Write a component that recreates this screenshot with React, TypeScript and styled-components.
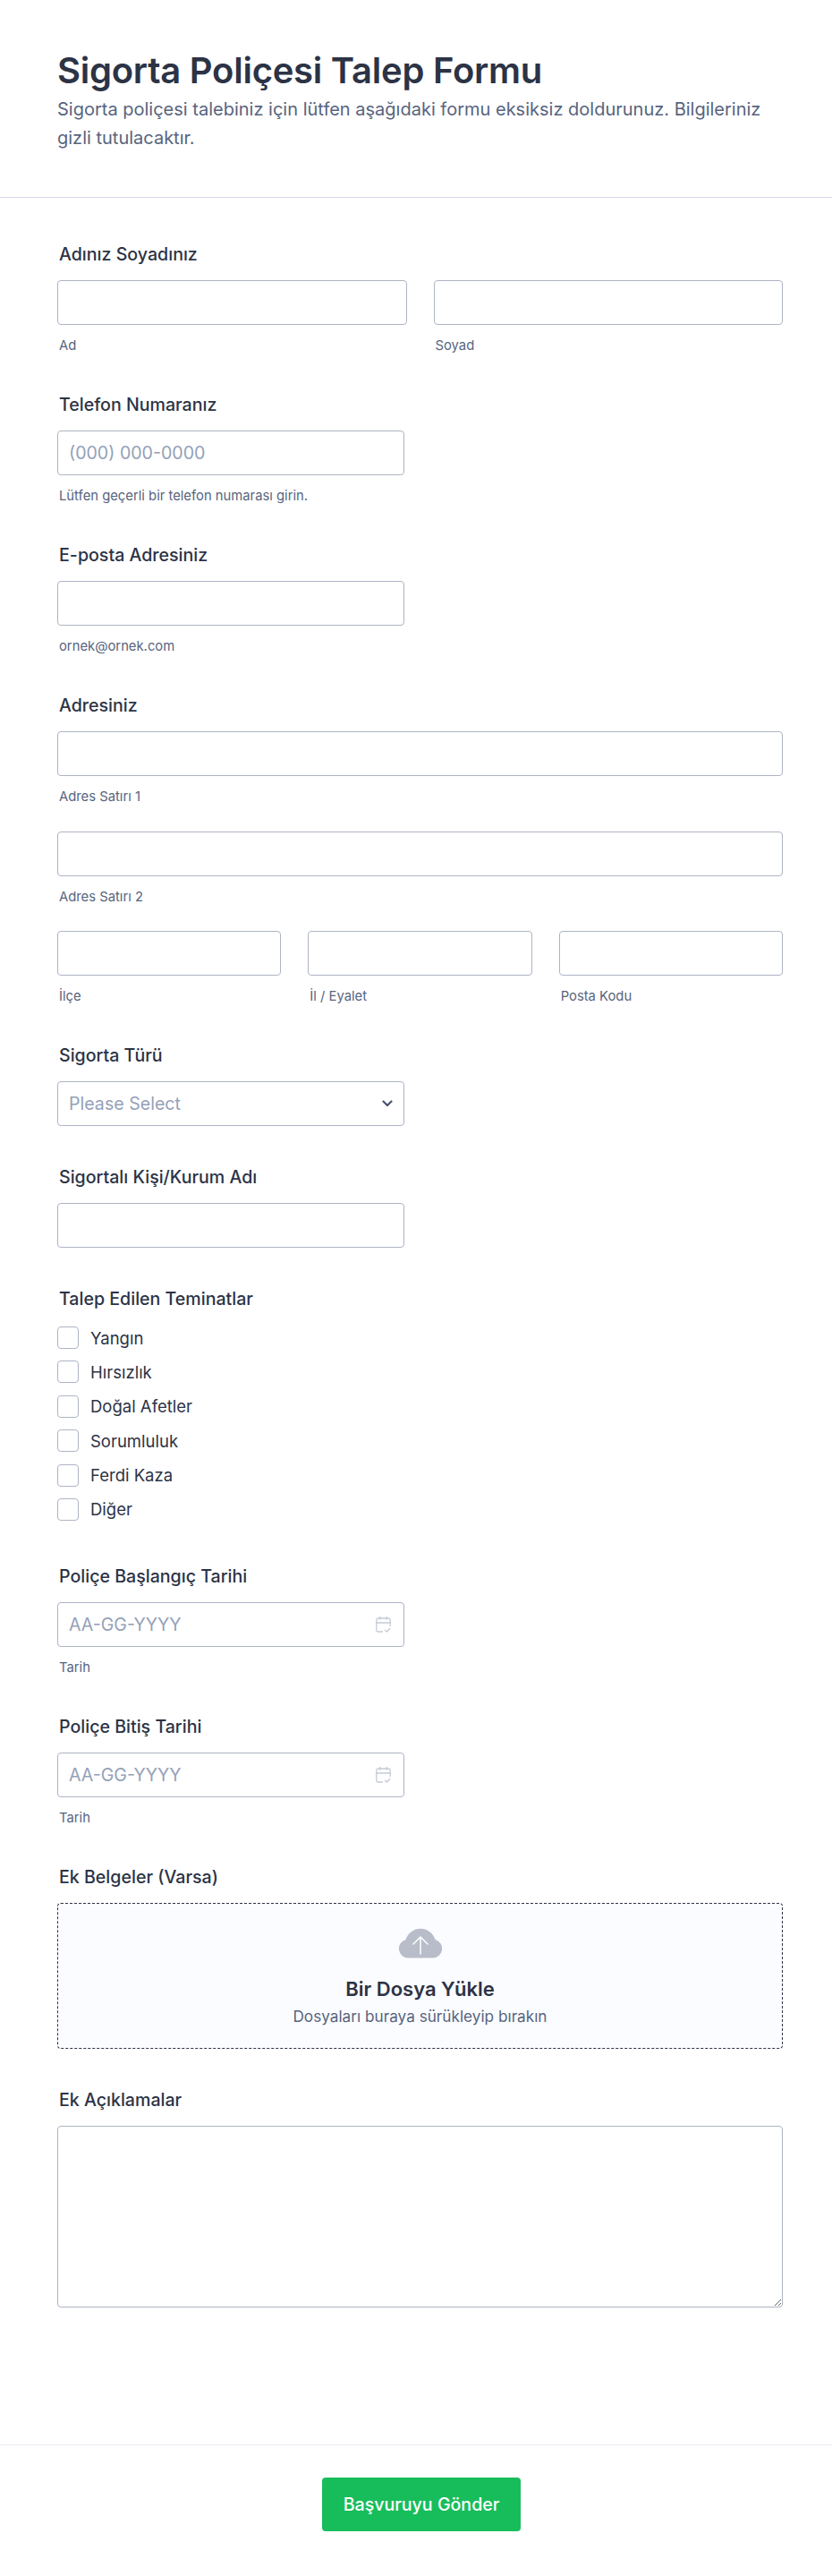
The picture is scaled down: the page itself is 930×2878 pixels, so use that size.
import { createGlobalStyle } from 'styled-components';
import styled from 'styled-components';

const GlobalStyle = createGlobalStyle`
    * { box-sizing: border-box; }
    html, body { margin: 0; padding: 0; background: #fff; }
    body { font-family: Inter, "Liberation Sans", sans-serif; color: #2c3345; }
`;

const Page = styled.form`
    width: 930px;
    min-height: 2878px;
    background: #fff;
`;

const Header = styled.header`
    height: 221px;
    padding: 51px 64px 0;
    border-bottom: 1px solid #d8dae9;
`;

const Title = styled.h1`
    margin: 0;
    font-size: 40px;
    line-height: 55px;
    font-weight: 600;
    letter-spacing: -0.25px;
    color: #2c3345;
`;

const Subtitle = styled.p`
    margin: 0;
    font-size: 20px;
    line-height: 32px;
    color: #57647e;
    width: 802px;
`;

const Body = styled.div`
    display: flex;
    flex-direction: column;
    height: 2511px;
    padding: 50px 55px 0 64px;
    border-bottom: 1px solid #eaebf2;
`;

const Field = styled.section<{ $gap?: number }>`
    margin-bottom: ${(p) => p.$gap ?? 44}px;
`;

const Label = styled.label`
    display: block;
    margin: 0 0 16px 2px;
    font-size: 19.6px;
    line-height: 26px;
    font-weight: 500;
    color: #2c3345;
`;

const Grid = styled.div<{ $cols: number; $gap: number }>`
    display: grid;
    grid-template-columns: repeat(${(p) => p.$cols}, 1fr);
    column-gap: ${(p) => p.$gap}px;
`;

const Half = styled.div`
    width: 388px;
    position: relative;
`;

const Stack = styled.div<{ $gap?: number }>`
    margin-bottom: ${(p) => p.$gap ?? 0}px;
`;

const Input = styled.input`
    display: block;
    width: 100%;
    height: 50px;
    padding: 0 12px;
    border: 1px solid #aeb4c4;
    border-radius: 4px;
    background: #fff;
    font-family: inherit;
    font-size: 19.6px;
    color: #2c3345;
    outline: none;
    &::placeholder { color: #94a1b8; opacity: 1; }
`;

const SelectBox = styled.select`
    display: block;
    width: 100%;
    height: 50px;
    padding: 0 12px;
    border: 1px solid #aeb4c4;
    border-radius: 4px;
    background: #fff;
    font-family: inherit;
    font-size: 19.6px;
    color: #94a1b8;
    appearance: none;
    outline: none;
`;

const OverIcon = styled.span<{ $right: number }>`
    position: absolute;
    top: 50%;
    right: ${(p) => p.$right}px;
    transform: translateY(-50%);
    display: flex;
    pointer-events: none;
`;

const Hint = styled.div`
    margin: 14px 0 0 2px;
    font-size: 14.8px;
    line-height: 18px;
    color: #57647e;
`;

const Checks = styled.div`
    display: flex;
    flex-direction: column;
    gap: 13.4px;
    margin-top: 18px;
`;

const CheckRow = styled.label`
    display: flex;
    align-items: center;
    gap: 13px;
    height: 25px;
    font-size: 18.5px;
    color: #2c3345;
`;

const Box = styled.input`
    appearance: none;
    margin: 0;
    width: 24px;
    height: 25px;
    border: 1px solid #aeb4c4;
    border-radius: 4px;
    background: #fff;
`;

const Drop = styled.div`
    display: flex;
    flex-direction: column;
    align-items: center;
    height: 163px;
    padding-top: 27px;
    border: 1px dashed #2c3345;
    border-radius: 4px;
    background: #fbfcff;
`;

const DropTitle = styled.div`
    margin-top: 19px;
    font-size: 22px;
    line-height: 30px;
    font-weight: 600;
    color: #2c3345;
`;

const DropSub = styled.div`
    margin-top: 4px;
    font-size: 17.2px;
    line-height: 24px;
    color: #57647e;
`;

const TextArea = styled.textarea`
    display: block;
    width: 100%;
    height: 203px;
    border: 1px solid #aeb4c4;
    border-radius: 4px;
    background: #fff;
    outline: none;
`;

const Footer = styled.footer`
    display: flex;
    justify-content: center;
    padding: 36px 0 0 12px;
`;

const Submit = styled.button`
    width: 222px;
    height: 60px;
    border: 0;
    border-radius: 4px;
    background: #18bd5b;
    color: #fff;
    font-family: Inter, sans-serif;
    font-size: 19.6px;
    font-weight: 500;
`;

const Calendar = () => (
    <svg width="17" height="19" viewBox="0 0 17 19" fill="none" stroke="#c5cad6" strokeWidth="1.3" strokeLinecap="round" strokeLinejoin="round">
        <path d="M7.5 17.5H2.500A1.800 1.800 0 0 1 .8 15.700V4.300A1.800 1.800 0 0 1 2.500 2.500H14.500A1.800 1.800 0 0 1 16.200 4.300V11" />
        <path d="M.8 7.500H16.200M4.800 .8V3.800M12.200 .8V3.800" />
        <path d="M10.500 15.800L12.300 17.500L15.800 14" />
    </svg>
);

const Chevron = () => (
    <svg width="12" height="8" viewBox="0 0 12 8" fill="none" stroke="#4a5470" strokeWidth="2.2" strokeLinecap="round" strokeLinejoin="round">
        <path d="M1.500 1.500L6 6L10.500 1.500" />
    </svg>
);

const Cloud = () => (
    <svg width="48" height="34" viewBox="0 0 48 34">
        <path fill="#b8bdc9" d="M10.500 33.500A10.500 10.500 0 0 1 7.500 12.900A17.300 17.300 0 0 1 40.500 12.900A10.500 10.500 0 0 1 37.500 33.500Z" />
        <path fill="none" stroke="#fff" strokeWidth="1.5" strokeLinecap="round" strokeLinejoin="round" d="M24 29V10M16 18L24 10L32 18" />
    </svg>
);

const coverages = ['Yangın', 'Hırsızlık', 'Doğal Afetler', 'Sorumluluk', 'Ferdi Kaza', 'Diğer'];

const DateField = ({ label }: { label: string }) => (
    <Field>
        <Label>{label}</Label>
        <Half>
            <Input placeholder="AA-GG-YYYY" />
            <OverIcon $right={15}>
                <Calendar />
            </OverIcon>
        </Half>
        <Hint>Tarih</Hint>
    </Field>
);

const App = () => (
    <Page>
        <GlobalStyle />
        <Header>
            <Title>Sigorta Poliçesi Talep Formu</Title>
            <Subtitle>Sigorta poliçesi talebiniz için lütfen aşağıdaki formu eksiksiz doldurunuz. Bilgileriniz gizli tutulacaktır.</Subtitle>
        </Header>
        <Body>
            <Field>
                <Label>Adınız Soyadınız</Label>
                <Grid $cols={2} $gap={30}>
                    <div>
                        <Input />
                        <Hint>Ad</Hint>
                    </div>
                    <div>
                        <Input />
                        <Hint>Soyad</Hint>
                    </div>
                </Grid>
            </Field>
            <Field>
                <Label>Telefon Numaranız</Label>
                <Half>
                    <Input placeholder="(000) 000-0000" />
                </Half>
                <Hint>Lütfen geçerli bir telefon numarası girin.</Hint>
            </Field>
            <Field>
                <Label>E-posta Adresiniz</Label>
                <Half>
                    <Input />
                </Half>
                <Hint>ornek@ornek.com</Hint>
            </Field>
            <Field>
                <Label>Adresiniz</Label>
                <Stack $gap={29.5}>
                    <Input />
                    <Hint>Adres Satırı 1</Hint>
                </Stack>
                <Stack $gap={29.5}>
                    <Input />
                    <Hint>Adres Satırı 2</Hint>
                </Stack>
                <Grid $cols={3} $gap={30}>
                    <div>
                        <Input />
                        <Hint>İlçe</Hint>
                    </div>
                    <div>
                        <Input />
                        <Hint>İl / Eyalet</Hint>
                    </div>
                    <div>
                        <Input />
                        <Hint>Posta Kodu</Hint>
                    </div>
                </Grid>
            </Field>
            <Field>
                <Label>Sigorta Türü</Label>
                <Half>
                    <SelectBox>
                        <option>Please Select</option>
                    </SelectBox>
                    <OverIcon $right={13}>
                        <Chevron />
                    </OverIcon>
                </Half>
            </Field>
            <Field>
                <Label>Sigortalı Kişi/Kurum Adı</Label>
                <Half>
                    <Input />
                </Half>
            </Field>
            <Field $gap={49}>
                <Label>Talep Edilen Teminatlar</Label>
                <Checks>
                    {coverages.map((c) => (
                        <CheckRow key={c}>
                            <Box type="checkbox" />
                            {c}
                        </CheckRow>
                    ))}
                </Checks>
            </Field>
            <DateField label="Poliçe Başlangıç Tarihi" />
            <DateField label="Poliçe Bitiş Tarihi" />
            <Field>
                <Label>Ek Belgeler (Varsa)</Label>
                <Drop>
                    <Cloud />
                    <DropTitle>Bir Dosya Yükle</DropTitle>
                    <DropSub>Dosyaları buraya sürükleyip bırakın</DropSub>
                </Drop>
            </Field>
            <Field>
                <Label>Ek Açıklamalar</Label>
                <TextArea />
            </Field>
        </Body>
        <Footer>
            <Submit type="button">Başvuruyu Gönder</Submit>
        </Footer>
    </Page>
);

export default App;
